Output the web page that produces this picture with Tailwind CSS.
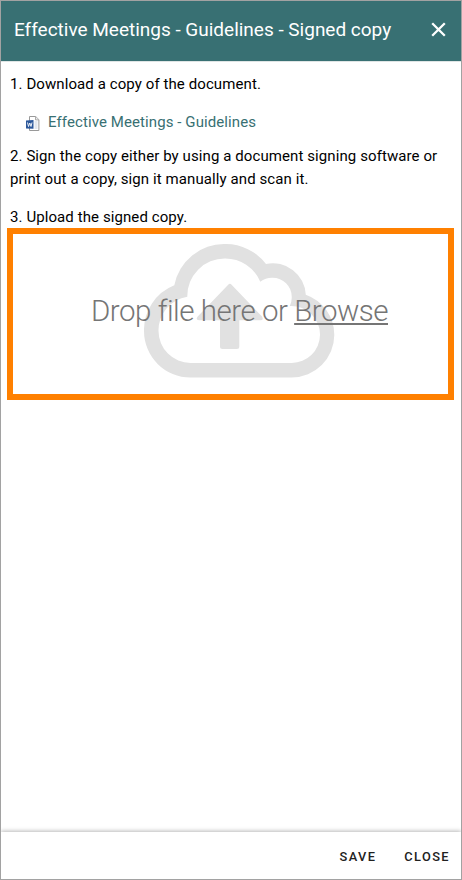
<!DOCTYPE html>
<html lang="en">
<head>
<meta charset="utf-8">
<title>Signed copy</title>
<script src="https://cdn.jsdelivr.net/npm/@tailwindcss/browser@4"></script>
</head>
<body class="bg-white">
<div class="flex h-[880px] w-[462px] flex-col overflow-hidden border border-[#a2a2a2] bg-white font-[Roboto,sans-serif] text-[15px] leading-[23px] text-black">
  <header class="flex h-[60px] shrink-0 items-center justify-between bg-[#387073] pl-[13px] pr-[15px] text-white">
    <h1 class="whitespace-nowrap pb-[3px] text-[19px] tracking-[-0.01px]">Effective Meetings - Guidelines - Signed copy</h1>
    <button aria-label="Close" class="pb-[3px]"><svg class="block" width="15" height="15" viewBox="0 0 15 15" fill="none" stroke="white" stroke-width="2.3"><path d="M1.2 1.2 13.8 13.8M13.8 1.2 1.2 13.8"/></svg></button>
  </header>
  <main class="flex grow flex-col border-t border-[#dfe5e5] pt-[11px] tracking-[0.09px]">
    <p class="pl-[9px]">1. Download a copy of the document.</p>
    <a class="mt-[15px] flex items-center pl-[25px] text-[#387073]">
      <svg class="mr-[8px] mt-px" width="14" height="15" viewBox="0 0 14 15"><path d="M3.5.5h6.2l3.2 3.2v10.8H3.5z" fill="#fff" stroke="#999"/><path d="M9.5.7v3.2h3.3" fill="#eee" stroke="#999" stroke-width=".8"/><path d="M8.5 6h3M8.5 8h3M8.5 10h3M8.5 12h3" stroke="#b9c4d6" stroke-width=".8"/><path d="M0 4.4 7.5 4v8.7L0 12.5z" fill="#2b579a"/><path d="m1.5 6.5 1 4 1.3-3.5 1.2 3.5 1-4" fill="none" stroke="#fff" stroke-width=".9"/></svg>
      <span>Effective Meetings - Guidelines</span>
    </a>
    <p class="mt-[11px] whitespace-nowrap pl-[9px]">2. Sign the copy either by using a document signing software or<br>print out a copy, sign it manually and scan it.</p>
    <p class="mt-[15px] pl-[9px]">3. Upload the signed copy.</p>
    <section class="relative -mt-px ml-[6px] h-[172px] w-[447px] border-[6px] border-[#ff8000]">
      <svg class="absolute left-[131px] top-[10px]" width="191" height="134" viewBox="144 244 191 134" fill="#e1e1e1">
        <path fill-rule="evenodd" d="M190.5 377.5A46.5 46.5 0 0 1 144 331A48 48 0 0 1 174.3 285.3A51 51 0 0 1 225 244A51 51 0 0 1 266 264A33 33 0 0 1 305.8 294.7A42.7 42.7 0 0 1 334.3 335A42.7 42.7 0 0 1 291.7 377.5ZM190.5 362.9H291.7A28.2 28.2 0 0 0 320 335A28.5 28.5 0 0 0 289.8 306A19 19 0 0 0 291.7 296.5A19 19 0 0 0 272.7 277.7A19 19 0 0 0 260.3 281.7A38 38 0 0 0 225 258.5A37.5 37.5 0 0 0 187.3 296.7A34 34 0 0 0 158.5 331A32 32 0 0 0 190.5 362.9Z"/>
        <path d="M228.2 284.7Q229.9 283 231.6 284.7L262 316.5Q264 320.2 260.5 320.2H239.3V346.5Q239.3 349 236.8 349H222.5Q220 349 220 346.5V320.2H199Q195.2 320.2 197.7 316.5Z"/>
      </svg>
      <p class="relative mt-[59px] whitespace-nowrap pl-[78px] text-[29.5px] font-light leading-[36px] tracking-[-0.48px] text-[#757575]">Drop file here or <a class="underline decoration-2 underline-offset-[2px]">Browse</a></p>
    </section>
  </main>
  <footer class="flex h-[47px] shrink-0 items-center justify-end gap-[28px] bg-white pr-[11px] pt-[2px] text-[12.8px] font-medium tracking-[1.4px] text-[#212121] shadow-[0_-1px_4px_rgba(0,0,0,0.28)]">
    <button>SAVE</button><button>CLOSE</button>
  </footer>
</div>
</body>
</html>
